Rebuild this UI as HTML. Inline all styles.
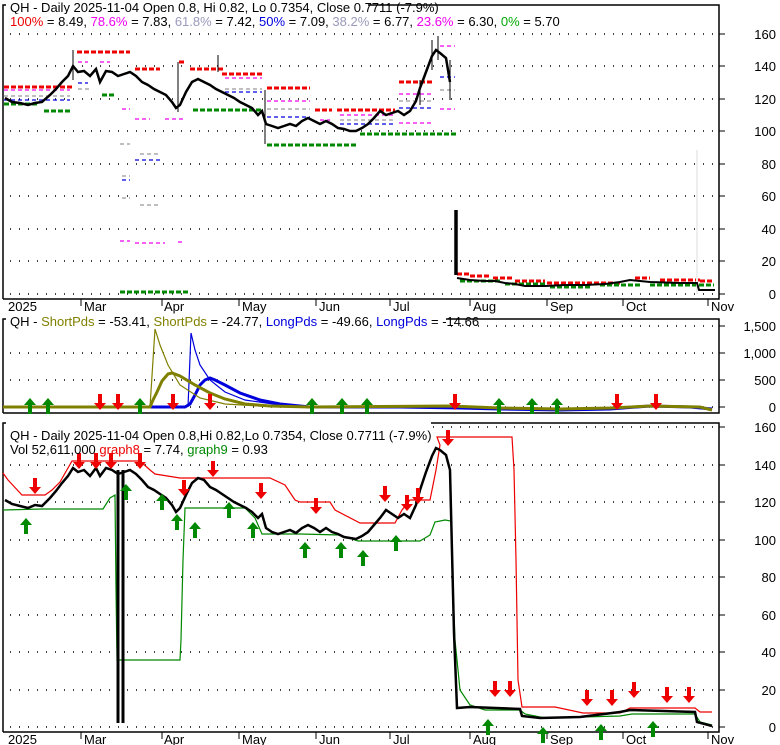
<!DOCTYPE html><html><head><meta charset="utf-8"><style>
body{margin:0;background:#fff;width:780px;height:745px;overflow:hidden}
svg{display:block}
text{font-family:"Liberation Sans",sans-serif;font-size:13px}
</style></head><body>
<svg width="780" height="745" xmlns="http://www.w3.org/2000/svg">
<defs>
<path id="dn" d="M-2,-10 h4 v9 h4 l-6,7 l-6,-7 h4z" fill="#e00"/>
<path id="up" d="M-2,10 h4 v-9 h4 l-6,-7 l-6,7 h4z" fill="#080"/>
</defs>
<g fill="none" stroke="#000" stroke-dasharray="1 8" stroke-width="1.5">
<path d="M10,34H715M10,66H715M10,99H715M10,131H715M10,164H715M10,196H715M10,229H715M10,261H715M10,294H715"/>
<path d="M10,326H715M10,353H715M10,380H715M10,407H715"/>
<path d="M10,427H715M10,465H715M10,502H715M10,540H715M10,577H715M10,615H715M10,652H715M10,690H715M10,727H715"/>
</g>
<g fill="none" stroke="#000" stroke-width="1.5">
<path d="M3,299V5H719V299H3"/><path d="M3,413V319H719V413H3"/><path d="M3,732V423H719V732H3"/>
</g>
<g stroke="#000"><path d="M719,34h6M719,66h6M719,99h6M719,131h6M719,164h6M719,196h6M719,229h6M719,261h6M719,294h6M719,326h6M719,353h6M719,380h6M719,407h6M719,427h6M719,465h6M719,502h6M719,540h6M719,577h6M719,615h6M719,652h6M719,690h6M719,727h6"/>
<path d="M81,299v7M162,299v7M239,299v7M316,299v7M390,299v7M470,299v7M547,299v7M623,299v7M708,299v7M81,732v7M162,732v7M239,732v7M316,732v7M390,732v7M470,732v7M547,732v7M623,732v7M708,732v7"/></g>
<g text-anchor="end" fill="#000">
<text x="776" y="39">160</text><text x="776" y="71">140</text><text x="776" y="104">120</text><text x="776" y="136">100</text><text x="776" y="169">80</text><text x="776" y="201">60</text><text x="776" y="234">40</text><text x="776" y="266">20</text><text x="776" y="299">0</text>
<text x="776" y="331">1,500</text><text x="776" y="358">1,000</text><text x="776" y="385">500</text><text x="776" y="412">0</text>
<text x="776" y="432">160</text><text x="776" y="470">140</text><text x="776" y="507">120</text><text x="776" y="545">100</text><text x="776" y="582">80</text><text x="776" y="620">60</text><text x="776" y="657">40</text><text x="776" y="695">20</text><text x="776" y="732">0</text>
</g>
<g fill="#000">
<text x="8" y="311">2025</text><text x="84" y="311">Mar</text><text x="164" y="311">Apr</text><text x="242" y="311">May</text><text x="319" y="311">Jun</text><text x="393" y="311">Jul</text><text x="473" y="311">Aug</text><text x="550" y="311">Sep</text><text x="626" y="311">Oct</text><text x="711" y="311">Nov</text>
<text x="8" y="744">2025</text><text x="84" y="744">Mar</text><text x="164" y="744">Apr</text><text x="242" y="744">May</text><text x="319" y="744">Jun</text><text x="393" y="744">Jul</text><text x="473" y="744">Aug</text><text x="550" y="744">Sep</text><text x="626" y="744">Oct</text><text x="711" y="744">Nov</text>
</g>
<g fill="none" stroke-dasharray="5 2" stroke-width="3">
<path stroke="#e00" d="M77,52H130M4,87H72M135,69H160M179,62H186M190,69H225M222,74H262M267,88H310M315,110H332M337,110H395M399,82H433M457,274H470M470,276H490M493,278H512M515,281H545M547,283H585M587,283H620M635,278H650M660,280H700M700,281H714"/>
<path stroke="#080" d="M4,104H37M44,111H70M102,95H115M120,292H190M193,110H262M267,145H357M360,134H457M460,281H500M505,284H545M550,287H590M600,285H640M650,285H714"/>
</g>
<g fill="none" stroke-dasharray="4 3" stroke-width="1.2">
<path stroke="#e0e" d="M4,90H70M78,62H88M100,62H110M122,109H130M135,119H150M165,119H185M225,78H262M267,101H310M320,120H330M340,115H395M399,94H433M399,123H433M440,46H455M440,109H455M120,241H130M135,243H165M178,242H185"/>
<path stroke="#999" d="M4,96H70M78,89H90M120,144H130M122,176H130M140,154H160M225,89H262M267,109H310M340,120H395M399,101H433M440,90H455M140,205H160M122,198H130"/>
<path stroke="#00d" d="M4,100H70M78,83H88M225,92H262M267,117H310M340,124H395M399,108H433M440,77H455M135,160H160M122,180H130"/>
</g>
<path d="M697,150V294" stroke="#eee" stroke-width="2"/>
<g fill="none" stroke="#000">
<polyline stroke-width="2.5" points="5,98 12,102 20,103 28,105 35,103 42,102 50,95 56,89 62,82 68,76 73,66 78,72 84,71 90,76 96,69 100,82 106,71 112,72 118,76 124,74 130,72 136,76 142,82 148,85 154,89 160,92 166,95 172,102 176,108 180,105 186,92 192,82 198,79 204,82 210,85 216,89 222,92 228,95 234,98 240,102 246,105 252,108 258,115 262,111 266,124 272,126 278,128 284,126 290,124 296,126 302,121 308,118 314,121 320,124 326,121 332,124 338,128 344,129 350,131 356,131 362,128 368,124 374,118 380,111 386,115 392,113 398,111 404,115 410,111 416,101 420,88 426,72 432,56 436,50 440,53 446,58 450,82"/>
<path stroke-width="1" d="M73,50V80M178,62V112M218,55V72M265,90V144M432,40V70M438,36V60M450,60V100M420,80V105"/>
<path d="M456,210V275" stroke-width="3.5"/>
<polyline stroke-width="2" points="457,278 470,280 485,281 495,281 505,283 515,284 525,286 545,286 565,285 585,285 605,284 620,282 630,280 650,282 680,283 697,283 699,290 715,290"/>
</g>
<g fill="none">
<polyline stroke="#00d" stroke-width="3" points="3,407 185,407 190,404 195,395 200,385 205,380 210,378 215,380 225,385 240,393 260,400 280,404 310,407 400,407 460,408 500,409 560,410 610,409 650,406 690,407 712,409"/>
<polyline stroke="#00d" stroke-width="1.2" points="188,407 191,333 195,350 200,365 210,380 225,392 245,400 280,405 310,407"/>
<polyline stroke="#808000" stroke-width="3" points="3,407 150,407 153,400 157,392 162,381 168,374 172,373 180,376 195,385 210,393 225,399 245,404 270,406 310,407 450,406 500,408 560,409 610,408 650,406 700,407 712,410"/>
<polyline stroke="#808000" stroke-width="1.2" points="150,407 155,329 160,345 168,365 180,385 200,398 225,404 260,406 310,407"/>
</g>
<g>
<use href="#dn" x="100" y="404"/><use href="#dn" x="118" y="404"/><use href="#dn" x="173" y="404"/><use href="#dn" x="210" y="404"/><use href="#dn" x="455" y="404"/><use href="#dn" x="617" y="404"/><use href="#dn" x="656" y="404"/>
<use href="#up" x="30" y="404"/><use href="#up" x="48" y="404"/><use href="#up" x="140" y="404"/><use href="#up" x="312" y="404"/><use href="#up" x="342" y="404"/><use href="#up" x="367" y="404"/><use href="#up" x="499" y="404"/><use href="#up" x="532" y="404"/><use href="#up" x="557" y="404"/>
</g>
<g fill="none">
<polyline stroke="#e00" stroke-width="1.2" points="3,473 8,480 22,495 45,495 52,490 60,482 72,461 140,461 150,470 155,474 180,478 270,478 285,485 295,500 300,502 330,502 335,510 360,523 395,523 402,510 410,500 430,500 434,480 436,470 440,445 437,437 512,437 514,470 516,560 518,680 522,707 555,707 583,713 620,713 630,708 695,708 700,712 712,712"/>
<polyline stroke="#080" stroke-width="1.2" points="3,510 42,509 103,509 110,498 115,495 116,590 117,660 180,660 181,640 182,600 183,560 185,508 190,508 245,508 255,518 262,534 300,534 340,535 358,541 420,541 430,535 435,522 445,520 451,521 452,567 455,640 460,690 470,705 485,710 520,710 525,714 545,718 620,716 632,714 695,714 700,722 712,725"/>
<polyline stroke="#000" stroke-width="2.5" points="5,500 12,504 20,506 28,508 35,505 42,506 50,498 56,491 62,483 68,476 73,468 78,472 84,470 90,476 96,468 100,476 106,468 112,470 118,474 124,472 130,470 136,474 142,480 148,487 154,490 160,494 166,498 172,505 176,512 180,508 186,495 192,483 198,478 204,480 210,487 216,490 222,494 228,498 234,502 240,505 246,508 252,512 258,518 262,514 266,528 272,532 278,534 284,532 290,530 296,533 302,528 308,525 314,528 320,532 326,528 332,532 338,534 344,537 350,538 356,539 362,536 368,532 374,525 380,518 386,510 392,514 398,518 404,514 410,518 416,505 420,490 426,472 432,456 436,448 440,450 446,455 450,470 454,633 457,708 470,707 520,709 522,716 540,718 580,717 620,712 630,710 695,712 697,722 712,726"/>
<path stroke="#000" stroke-width="3" d="M118,470V723M123,470V723"/>
</g>
<g>
<use href="#dn" x="35" y="488"/><use href="#dn" x="79" y="463"/><use href="#dn" x="96" y="463"/><use href="#dn" x="111" y="463"/><use href="#dn" x="140" y="463"/><use href="#dn" x="184" y="490"/><use href="#dn" x="213" y="471"/><use href="#dn" x="261" y="493"/><use href="#dn" x="316" y="508"/><use href="#dn" x="385" y="496"/><use href="#dn" x="407" y="505"/><use href="#dn" x="418" y="498"/><use href="#dn" x="448" y="440"/><use href="#dn" x="495" y="691"/><use href="#dn" x="510" y="691"/><use href="#dn" x="587" y="700"/><use href="#dn" x="612" y="700"/><use href="#dn" x="634" y="692"/><use href="#dn" x="667" y="697"/><use href="#dn" x="689" y="697"/>
<use href="#up" x="26" y="524"/><use href="#up" x="126" y="490"/><use href="#up" x="162" y="500"/><use href="#up" x="177" y="520"/><use href="#up" x="195" y="528"/><use href="#up" x="229" y="508"/><use href="#up" x="253" y="528"/><use href="#up" x="305" y="548"/><use href="#up" x="341" y="548"/><use href="#up" x="363" y="556"/><use href="#up" x="396" y="541"/><use href="#up" x="488" y="725"/><use href="#up" x="543" y="733"/><use href="#up" x="601" y="730"/><use href="#up" x="653" y="727"/>
</g>
<rect x="6" y="0" width="362" height="14" fill="#fff"/>
<text x="10" y="12" fill="#000">QH - Daily 2025-11-04 Open 0.8, Hi 0.82, Lo 0.7354, Close 0.7711 (-7.9%)</text>
<rect x="10" y="14" width="536" height="14" fill="#fff"/>
<text x="10" y="26"><tspan fill="#e00">100%</tspan> = 8.49, <tspan fill="#e0e">78.6%</tspan> = 7.83, <tspan fill="#99b">61.8%</tspan> = 7.42, <tspan fill="#00d">50%</tspan> = 7.09, <tspan fill="#99b">38.2%</tspan> = 6.77, <tspan fill="#e0e">23.6%</tspan> = 6.30, <tspan fill="#0a0">0%</tspan> = 5.70</text>
<rect x="6" y="314" width="440" height="14" fill="#fff"/>
<text x="10" y="326">QH - <tspan fill="#808000">ShortPds</tspan> = -53.41, <tspan fill="#808000">ShortPds</tspan> = -24.77, <tspan fill="#00d">LongPds</tspan> = -49.66, <tspan fill="#00d">LongPds</tspan> = -14.66</text>
<rect x="6" y="418" width="425" height="30" fill="#fff"/>
<text x="10" y="440">QH - Daily 2025-11-04 Open 0.8,Hi 0.82,Lo 0.7354, Close 0.7711 (-7.9%)</text>
<text x="10" y="454">Vol 52,611,000 <tspan fill="#e00">graph8</tspan> = 7.74, <tspan fill="#080">graph9</tspan> = 0.93</text>
</svg>
</body></html>
